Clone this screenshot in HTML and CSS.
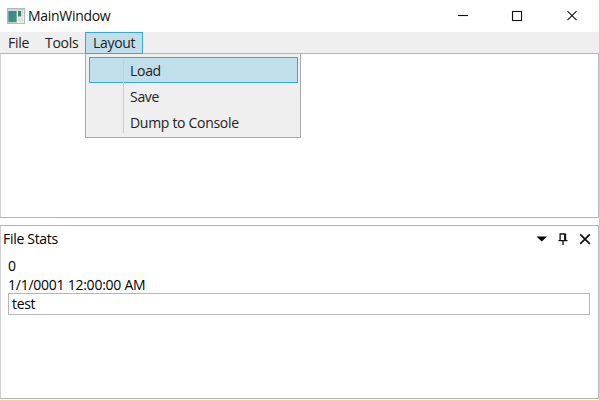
FILE: index.html
```
<!DOCTYPE html>
<html lang="en">
<head>
<meta charset="utf-8">
<title>MainWindow</title>
<link rel="stylesheet" href="styles.css">
</head>
<body>
<div class="window">
  <header class="titlebar">
    <svg class="app-icon" width="18" height="16" viewBox="0 0 18 16">
      <defs><linearGradient id="g" x1="0" y1="0" x2="1" y2="1"><stop offset="0" stop-color="#3f7d9c"/><stop offset="1" stop-color="#439a68"/></linearGradient></defs>
      <rect x=".5" y=".5" width="17" height="15" fill="#eef0f1" stroke="#b3b8ba"/>
      <rect x="1" y="1" width="16" height="1.5" fill="#c9cdcf"/>
      <rect x="1.3" y="3" width="8.4" height="11.3" fill="url(#g)"/>
      <rect x="11" y="3" width="3" height="5.5" fill="#39866f"/>
      <rect x="14.5" y="3" width="1.5" height="5.5" fill="#c5cfd0"/>
      <rect x="11" y="10" width="5" height="4" fill="#dce0e2"/>
    </svg>
    <span class="title">MainWindow</span>
    <svg class="caption" width="120" height="12" viewBox="0 0 120 12" fill="none" stroke="#111" stroke-width="1.1">
      <path d="M0 5.5H10"/><rect x="54.5" y="1.5" width="9" height="9"/><path d="M109.5 1.2l9 9M118.5 1.2l-9 9"/>
    </svg>
  </header>
  <nav class="menubar">
    <span class="item file">File</span>
    <span class="item tools">Tools</span>
    <div class="item layout"><span>Layout</span>
      <div class="menu">
        <div class="entry active"><span class="load">Load</span></div>
        <div class="entry"><span class="save">Save</span></div>
        <div class="entry"><span class="dump">Dump to Console</span></div>
      </div>
    </div>
  </nav>
  <main class="pane document"></main>
  <section class="pane stats">
    <div class="pane-head">
      <span class="pane-title">File Stats</span>
      <svg width="56" height="14" viewBox="0 0 56 14">
        <path d="M.5 4.5H11L5.8 9.6Z" fill="#000"/>
        <path d="M24.1 8.5V2H29V8.5M22.5 8.7H31.5M27 9v4" fill="none" stroke="#111" stroke-width="1.3"/>
        <path d="M29.2 2v6.5" stroke="#111" stroke-width="2"/>
        <path d="M44.2 2.3l9.6 9.6M53.8 2.3l-9.6 9.6" stroke="#111" stroke-width="1.7"/>
      </svg>
    </div>
    <div class="line count">0</div>
    <div class="line date">1/1/0001 12:00:00 AM</div>
    <div class="field">test</div>
  </section>
</div>
</body>
</html>
```
FILE: styles.css
```
* { box-sizing: border-box; }
body { margin: 0; background: #fff; }
.window {
  width: 600px; height: 401px;
  display: flex; flex-direction: column;
  border-right: 1px solid #f6c69a;
  border-bottom: 1px solid #ffcf85;
  font: 14px/18px "Open Sans", "Noto Sans", sans-serif;
  letter-spacing: -0.3px;
  color: #111;
  white-space: nowrap;
}
.titlebar { height: 32px; flex: none; display: flex; align-items: center; padding: 0 21px 0 7px; }
.title { margin-left: 3px; }
.caption { margin-left: auto; }
.menubar { height: 21px; flex: none; display: flex; background: #efefef; color: #222; }
.item { height: 21px; line-height: 22px; }
.file { width: 45px; padding-left: 8px; }
.tools { width: 40px; }
.layout {
  position: relative; width: 58px; height: 22px; line-height: 20px;
  padding-left: 7px; background: #c1deeb; border: 1px solid #35a8df; z-index: 2;
}
.menu {
  position: absolute; left: -1px; top: 21px; width: 216px; height: 84px;
  padding: 3px 2px 3px 3px; background: #efefef; border: 1px solid #a8a8a8; border-top: 0;
}
.menu::after { content: ""; position: absolute; left: 37px; top: 6px; width: 1px; height: 73px; background: #c5cfd3; }
.entry { height: 26px; line-height: 28px; padding-left: 41px; }
.active { line-height: 25px; padding-left: 40px; background: #c1deeb; border: 1px solid #35a8df; }
.pane { border: 1px solid #b0b3b9; border-left-color: #cfd0d3; border-right-color: #a9c0dc; }
.document { height: 165px; flex: none; }
.stats { height: 174px; margin-top: 7px; flex: none; padding: 0 8px 0 7px; color: #000; }
.pane-head { height: 29px; display: flex; align-items: center; justify-content: space-between; margin: -2px -2px 0 -5px; }
.line { height: 19px; line-height: 19px; }
.count { margin-top: 3px; }
.date { letter-spacing: -0.25px; }
.field { height: 22px; line-height: 20px; border: 1px solid #b5b5bd; padding-left: 3px; margin-top: -1px; }
```
